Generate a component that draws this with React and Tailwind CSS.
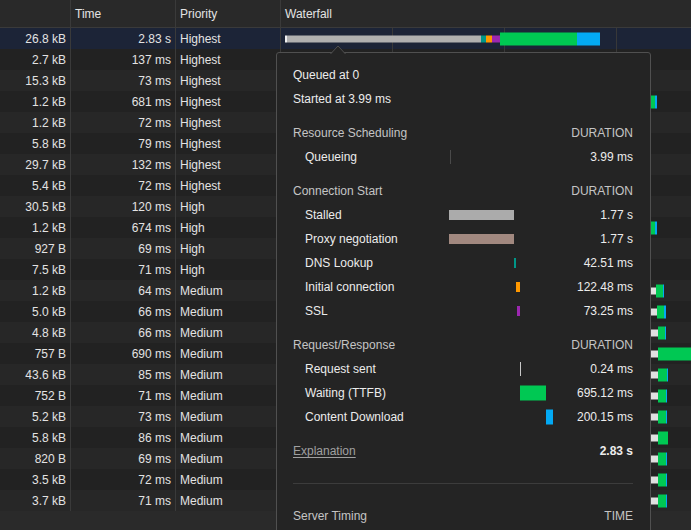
import React from "react";

const sizes = ["26.8 kB","2.7 kB","15.3 kB","1.2 kB","1.2 kB","5.8 kB","29.7 kB","5.4 kB","30.5 kB","1.2 kB","927 B","7.5 kB","1.2 kB","5.0 kB","4.8 kB","757 B","43.6 kB","752 B","5.2 kB","5.8 kB","820 B","3.5 kB","3.7 kB"];
const times = ["2.83 s","137 ms","73 ms","681 ms","72 ms","79 ms","132 ms","72 ms","120 ms","674 ms","69 ms","71 ms","64 ms","66 ms","66 ms","690 ms","85 ms","71 ms","73 ms","86 ms","69 ms","72 ms","71 ms"];
const prio = (i) => (i < 8 ? "Highest" : i < 12 ? "High" : "Medium");

const W = "#e0e0e0", G = "#00c853", B = "#03a9f4";
// segments relative to waterfall cell left edge (x=281)
const seg = (x1, x2, c, h) => ({ l: x1 - 281, w: x2 - x1, c, h });
const tail = (wEnd, gEnd, bEnd) => {
  const s = [seg(600, wEnd, W, 7), seg(wEnd, gEnd, G, 13)];
  if (bEnd) s.push(seg(gEnd, bEnd, B, 13));
  return s;
};
const bars = {
  0: [
    seg(285, 287, "#f0f0f0", 7),
    seg(287, 481, "#b0b0b0", 7),
    seg(481, 486, "#009688", 7),
    seg(486, 492, "#ff9800", 7),
    seg(492, 500, "#9c27b0", 7),
    seg(500, 577, G, 13),
    seg(577, 600, B, 13),
  ],
  3: [seg(620, 655, G, 13), seg(655, 657, B, 13)],
  9: [seg(620, 655, G, 13), seg(655, 657, B, 13)],
  12: tail(656, 663, 664),
  13: tail(657, 664, 666),
  14: tail(658, 665, 666),
  15: tail(658, 720),
  16: tail(658, 667, 668),
  17: tail(658, 666, 667),
  18: tail(658, 666, 667),
  19: tail(658, 668),
  20: tail(658, 666, 667),
  21: tail(658, 666, 667),
  22: tail(658, 666, 667),
};

function Row({ i }) {
  const bg = i === 0 ? "bg-[#1c2437]" : i % 2 === 1 ? "bg-[#222222]" : "bg-[#272727]";
  return (
    <div className={`flex h-[21px] items-center ${bg}`}>
      <div className="flex h-full w-[71px] items-center justify-end border-r border-[#3a3a3a] pr-1">{sizes[i]}</div>
      <div className="flex h-full w-[105px] items-center justify-end border-r border-[#3a3a3a] pr-1">{times[i]}</div>
      <div className="flex h-full w-[105px] items-center border-r border-[#3a3a3a] pl-1">{prio(i)}</div>
      <div className="relative h-full flex-1 overflow-hidden">
        <div className="absolute top-0 bottom-0 left-[111px] w-px bg-[#383838]" />
        <div className="absolute top-0 bottom-0 left-[223px] w-px bg-[#383838]" />
        <div className="absolute top-0 bottom-0 left-[335px] w-px bg-[#383838]" />
        {(bars[i] || []).map((s, k) => (
          <div
            key={k}
            className="absolute top-1/2 -translate-y-1/2"
            style={{ left: s.l, width: s.w, height: s.h, background: s.c }}
          />
        ))}
      </div>
    </div>
  );
}

function Bar({ l, w, h, c }) {
  return (
    <div
      className="absolute top-1/2 -translate-y-1/2"
      style={{ left: l, width: w, height: h, background: c }}
    />
  );
}

function TRow({ label, bar, value }) {
  return (
    <div className="flex h-6 items-center">
      <div className="w-[156px] pl-3">{label}</div>
      <div className="relative h-full w-[104px]">{bar}</div>
      <div className="flex-1 text-right">{value}</div>
    </div>
  );
}

function Head({ left, right, className = "" }) {
  return (
    <div className={`flex h-6 items-center justify-between text-[#c4c4c4] ${className}`}>
      <span>{left}</span>
      <span>{right}</span>
    </div>
  );
}

export default function App() {
  return (
    <div className="relative h-[530px] w-[691px] overflow-hidden bg-[#2a2a2a] font-['Liberation_Sans',Arial,sans-serif] text-[12px] text-[#e3e3e3]">
      <div className="flex h-full flex-col">
        <div className="flex h-[28px] items-center border-b border-[#3a3a3a] bg-[#292929]">
          <div className="h-full w-[71px] border-r border-[#3a3a3a]" />
          <div className="flex h-full w-[105px] items-center border-r border-[#3a3a3a] pl-1">Time</div>
          <div className="flex h-full w-[105px] items-center border-r border-[#3a3a3a] pl-1">Priority</div>
          <div className="flex h-full flex-1 items-center pl-1">Waterfall</div>
        </div>
        {sizes.map((_, i) => (
          <Row key={i} i={i} />
        ))}
        <div className="flex-1 bg-[#2a2a2a]" />
      </div>

      <div className="absolute left-[276px] top-[52px] h-[500px] w-[375px] rounded-[3px] border border-[#505050] bg-[#242424] pl-4 pr-[17px] pt-[10px] text-[#ececec]">
        <svg className="absolute left-[53px] top-[-8px]" width="16" height="9" viewBox="0 0 16 9">
          <path d="M0.5 9 L8 1 L15.5 9" fill="#242424" stroke="#505050" strokeWidth="1" />
        </svg>
        <div className="flex h-6 items-center">Queued at 0</div>
        <div className="flex h-6 items-center">Started at 3.99 ms</div>

        <Head className="mt-[10px]" left="Resource Scheduling" right="DURATION" />
        <TRow label="Queueing" value="3.99 ms" bar={<Bar l={1} w={1} h={14} c="#4a4a4a" />} />

        <Head className="mt-[10px]" left="Connection Start" right="DURATION" />
        <TRow label="Stalled" value="1.77 s" bar={<Bar l={0} w={65} h={10} c="#ababab" />} />
        <TRow label="Proxy negotiation" value="1.77 s" bar={<Bar l={0} w={65} h={10} c="#a1887f" />} />
        <TRow label="DNS Lookup" value="42.51 ms" bar={<Bar l={65} w={2} h={10} c="#009688" />} />
        <TRow label="Initial connection" value="122.48 ms" bar={<Bar l={67} w={4} h={10} c="#ff9800" />} />
        <TRow label="SSL" value="73.25 ms" bar={<Bar l={68} w={3} h={10} c="#9c27b0" />} />

        <Head className="mt-[10px]" left="Request/Response" right="DURATION" />
        <TRow label="Request sent" value="0.24 ms" bar={<Bar l={71} w={1} h={14} c="#c8c8c8" />} />
        <TRow label="Waiting (TTFB)" value="695.12 ms" bar={<Bar l={71} w={26} h={15} c={G} />} />
        <TRow label="Content Download" value="200.15 ms" bar={<Bar l={97} w={7} h={15} c={B} />} />

        <div className="mt-[10px] flex h-6 items-center justify-between">
          <span className="text-[#a0a0a0] underline underline-offset-2">Explanation</span>
          <span className="font-bold">2.83 s</span>
        </div>
        <div className="mt-[20px] h-px bg-[#3c3c3c]" />
        <Head className="mt-[20px]" left="Server Timing" right="TIME" />
      </div>
    </div>
  );
}
